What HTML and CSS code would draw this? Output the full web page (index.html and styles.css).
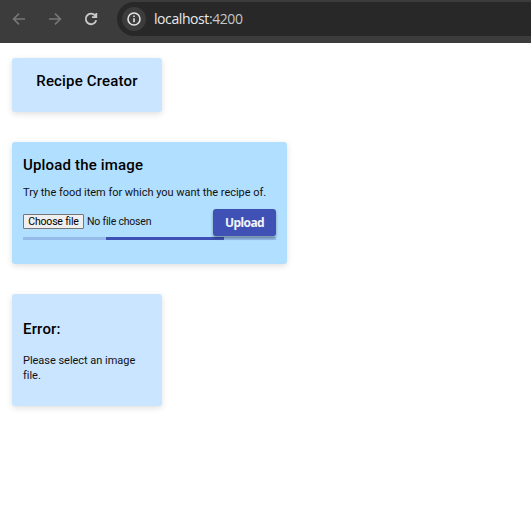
FILE: index.html
```html
<!DOCTYPE html>
<html lang="en">
<head>
<meta charset="utf-8">
<title>Recipe Creator</title>
<link rel="stylesheet" href="styles.css">
</head>
<body>
<header class="toolbar">
  <svg class="nav-icon" viewBox="0 0 14 14"><path d="M13 7H2M7 1.6L1.6 7L7 12.4"/></svg>
  <svg class="nav-icon" viewBox="0 0 14 14"><path d="M1 7h11M7 1.6L12.4 7L7 12.4"/></svg>
  <svg class="nav-icon reload" viewBox="0 0 14 14"><path d="M12.2 8.2A5.3 5.3 0 1 1 11.2 3.6L12 4.6M12.3 1v4.2H8"/></svg>
  <div class="address">
    <span class="site-info"><svg viewBox="0 0 14 14"><circle cx="7" cy="7" r="6"/><path d="M7 6.3v4M7 3.5v1.6"/></svg></span>
    <span class="url">localhost<span class="port">:4200</span></span>
  </div>
</header>
<main class="page">
  <section class="card title-card"><h1>Recipe Creator</h1></section>
  <section class="card upload-card">
    <h2>Upload the image</h2>
    <p>Try the food item for which you want the recipe of.</p>
    <div class="upload-row">
      <button class="choose">Choose file</button>
      <span class="file-name">No file chosen</span>
      <button class="upload">Upload</button>
    </div>
    <div class="progress"><div class="progress-fill"></div></div>
  </section>
  <section class="card error-card">
    <h2>Error:</h2>
    <p>Please select an image file.</p>
  </section>
</main>
</body>
</html>
```

FILE: styles.css
```css
* { box-sizing: border-box; }
body { margin: 0; background: #fff; color: #111; font-family: Roboto, sans-serif; overflow: hidden; }
h1, h2, p { margin: 0; }

.toolbar { display: flex; height: 43px; padding: 2px 0 7px 12px; background: #3c3c3c; align-items: center; }
.nav-icon { width: 14px; height: 14px; margin-right: 22px; flex: none; fill: none; stroke: #777; stroke-width: 1.6; }
.nav-icon.reload { margin-right: 19px; stroke: #c9c9c9; stroke-width: 1.8; }
.address { display: flex; flex: 1; height: 34px; padding-left: 5px; align-items: center; background: #282828; border-radius: 17px 0 0 17px; }
.site-info { display: flex; width: 24px; height: 24px; align-items: center; justify-content: center; border-radius: 50%; background: #3c3c3c; }
.site-info svg { width: 14px; height: 14px; fill: none; stroke: #e3e3e3; stroke-width: 1.6; }
.url { margin-left: 8px; color: #e8e8e8; font: 14px/20px "Open Sans", sans-serif; letter-spacing: -0.42px; }
.port { color: #c7c7c7; }

.page { display: flex; flex-direction: column; align-items: flex-start; gap: 30px; padding: 15px 12px; }
.card { padding: 0 11px; border-radius: 3px; background: #cae5ff; box-shadow: 0 2px 6px rgba(0, 0, 0, .13); }
.card h1, .card h2 { font-size: 15px; line-height: 20px; font-weight: 500; color: #000; letter-spacing: .17px; }
.card p { font-size: 11px; line-height: 15px; letter-spacing: -.03px; }
.title-card { width: 150px; height: 54px; padding-top: 13px; text-align: center; }
.upload-card { width: 275px; height: 122px; padding-top: 13px; background: #b1dfff; }
.upload-card p { margin-top: 10px; white-space: nowrap; }
.upload-row { display: flex; height: 28px; margin-top: 9px; }
.choose { width: 61px; height: 15px; margin-top: 5px; padding: 0; border: 1px solid #767676; border-radius: 1px; background: #efefef; color: #000; font: 10.5px/13px Roboto, sans-serif; letter-spacing: -.2px; }
.file-name { margin: 5px 0 0 3px; font-size: 10.5px; line-height: 15px; letter-spacing: -.2px; }
.upload { position: relative; width: 63px; height: 27px; margin-left: auto; padding: 0; border: 0; border-radius: 3px; background: #3f51b5; color: #f3f4fb; font: bold 12px/27px "Noto Sans", sans-serif; letter-spacing: -.6px; box-shadow: 0 2px 3px rgba(0, 0, 0, .35); }
.progress { height: 3px; background: #94bbea; }
.progress-fill { width: 118px; height: 3px; margin-left: 83px; background: #3f51b5; }
.error-card { width: 150px; height: 112px; padding-top: 25px; }
.error-card p { margin-top: 14px; }
```
